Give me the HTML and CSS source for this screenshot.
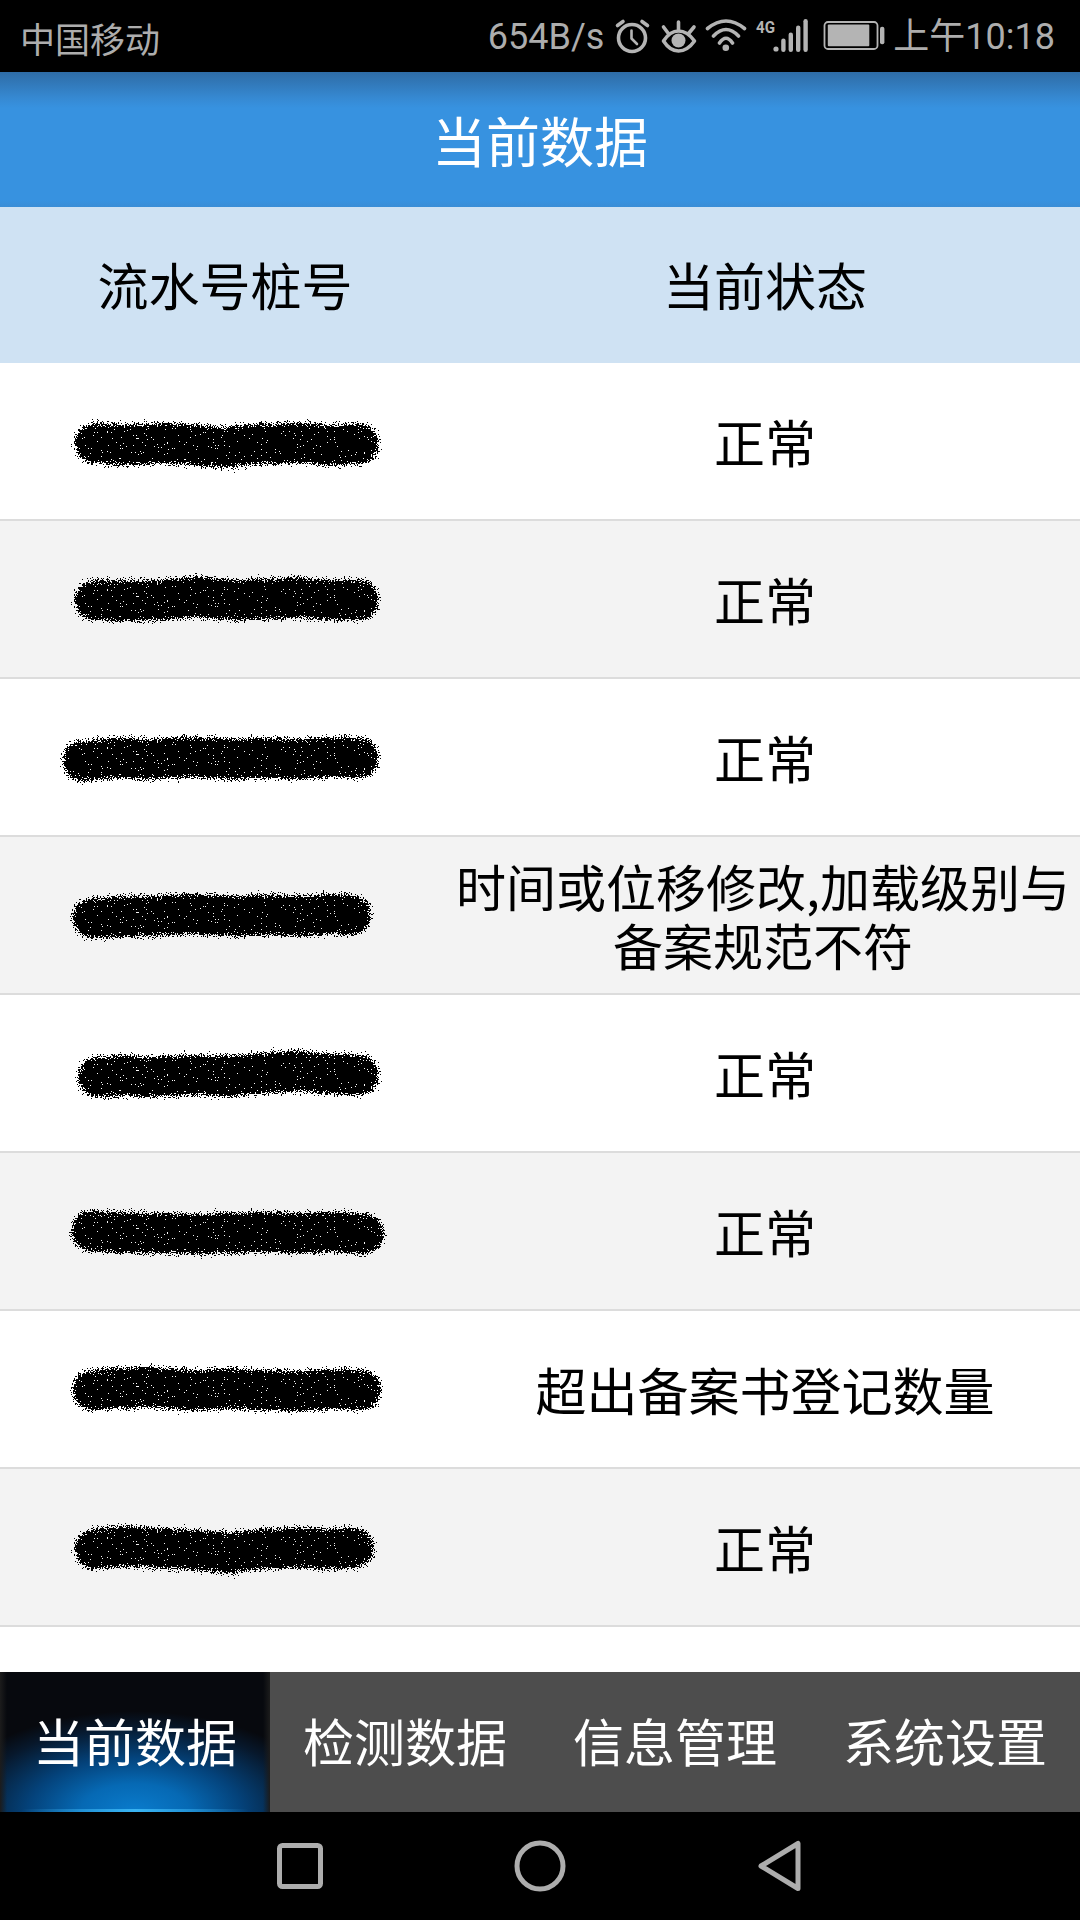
FILE: index.html
```html
<!DOCTYPE html>
<html lang="zh-CN">
<head>
<meta charset="utf-8">
<title>当前数据</title>
<link rel="stylesheet" href="styles.css">
</head>
<body>
<svg class="defs" aria-hidden="true">
  <defs>
    <filter id="smudge" filterUnits="userSpaceOnUse" x="40" y="-10" width="370" height="100" color-interpolation-filters="sRGB">
      <feTurbulence type="fractalNoise" baseFrequency="0.7" numOctaves="3" seed="7" result="n"/>
      <feDisplacementMap in="SourceGraphic" in2="n" scale="16" xChannelSelector="R" yChannelSelector="G" result="d"/>
      <feColorMatrix in="n" type="matrix" values="0 0 0 0 0  0 0 0 0 0  0 0 0 0 0  14 0 0 0 -3.1" result="m"/>
      <feComposite in="d" in2="m" operator="in" result="c"/>
      <feComponentTransfer in="c"><feFuncA type="discrete" tableValues="0 1"/></feComponentTransfer>
    </filter>
  </defs>
</svg>
<div class="app">
  <header class="status">
    <span class="carrier">中国移动</span>
    <div class="status-right">
      <span class="speed">654B/s</span>
      <svg class="status-icons" viewBox="612 14 276 44" width="276" height="44">
        <g class="ic-stroke">
          <circle cx="632" cy="38" r="13.5"/>
          <path d="M617.5 25.5L623 21.5M642 21.5L647.5 25.5"/>
          <path class="thin" d="M631.5 30.5V38.5L637 44"/>
          <path d="M663.5 41C668 34 673 31 678.5 31C684 31 689.500 34 694.500 41C689.500 48 684 51 678.500 51C673 51 668 48 663.500 41Z"/>
          <path d="M678.500 22V29.500M663.500 27L668 33M694 27L689 33"/>
          <path d="M707.500 28.500Q726 13.500 744.500 28.500M713.500 36Q726 23 738.500 36M719.500 43Q726 33.500 732.500 43"/>
        </g>
        <g class="ic-fill">
          <circle cx="678.500" cy="40.500" r="7"/>
          <circle cx="725.800" cy="47.700" r="3.300"/>
          <circle cx="776" cy="49" r="2.600"/>
          <rect x="781.200" y="38.500" width="4.400" height="13.500" rx="2.200"/>
          <rect x="788.600" y="32.500" width="4.400" height="19.500" rx="2.200"/>
          <rect x="796" y="25.500" width="4.400" height="26.500" rx="2.200"/>
          <rect x="803.400" y="19" width="4.400" height="33" rx="2.200"/>
          <rect x="827.800" y="24.500" width="41.500" height="21.800" rx="1"/>
          <rect x="880" y="26.700" width="4.400" height="17.600" rx="2"/>
          <text class="net" x="756" y="33" textLength="19" lengthAdjust="spacingAndGlyphs">4G</text>
        </g>
        <rect class="bat" x="824.500" y="22" width="53" height="27" rx="3.500"/>
      </svg>
      <span class="clock">上午10:18</span>
    </div>
  </header>

  <div class="titlebar">当前数据</div>

  <div class="thead">
    <div class="col-a">流水号桩号</div>
    <div class="col-b">当前状态</div>
  </div>

  <main class="tbody">
    <div class="row">
      <div class="col-a"><svg class="smear" viewBox="55 0 340 80" width="340" height="80"><path d="M95 42L125 44L165 42L205 45L225 46L265 43L300 42L330 44L359 43"/></svg></div>
      <div class="col-b">正常</div>
    </div>
    <div class="row alt">
      <div class="col-a"><svg class="smear" viewBox="55 0 340 80" width="340" height="80"><path d="M95 41L125 42L160 41L195 38L230 41L265 40L300 39L335 41L359 41"/></svg></div>
      <div class="col-b">正常</div>
    </div>
    <div class="row">
      <div class="col-a"><svg class="smear" viewBox="55 0 340 80" width="340" height="80"><path d="M83 44L115 41L150 42L190 40L230 42L265 41L300 42L335 40L359 41"/></svg></div>
      <div class="col-b">正常</div>
    </div>
    <div class="row alt">
      <div class="col-a"><svg class="smear" viewBox="55 0 340 80" width="340" height="80"><path d="M93 43L120 42L150 41L190 39L230 41L265 40L300 41L330 39L351 40"/></svg></div>
      <div class="col-b long">时间或位移修改,加载级别与备案规范不符</div>
    </div>
    <div class="row">
      <div class="col-a"><svg class="smear" viewBox="55 0 340 80" width="340" height="80"><path d="M98 44L125 43L150 44L190 42L230 43L265 40L300 38L335 41L359 42"/></svg></div>
      <div class="col-b">正常</div>
    </div>
    <div class="row alt">
      <div class="col-a"><svg class="smear" viewBox="55 0 340 80" width="340" height="80"><path d="M92 40L125 42L160 42L195 43L230 42L265 41L300 42L335 41L364 43"/></svg></div>
      <div class="col-b">正常</div>
    </div>
    <div class="row">
      <div class="col-a"><svg class="smear" viewBox="55 0 340 80" width="340" height="80"><path d="M93 41L120 39L150 38L190 41L230 40L265 41L300 42L335 40L361 41"/></svg></div>
      <div class="col-b">超出备案书登记数量</div>
    </div>
    <div class="row alt">
      <div class="col-a"><svg class="smear" viewBox="55 0 340 80" width="340" height="80"><path d="M95 42L125 39L160 41L195 43L230 46L265 42L300 41L335 42L354 41"/></svg></div>
      <div class="col-b">正常</div>
    </div>
  </main>

  <nav class="tabs">
    <div class="tab active">当前数据</div>
    <div class="tab">检测数据</div>
    <div class="tab">信息管理</div>
    <div class="tab">系统设置</div>
  </nav>

  <footer class="navbar">
    <div class="nav-cell"><svg viewBox="0 0 46 46" width="46" height="46"><rect x="2.500" y="2.500" width="41" height="41" rx="3"/></svg></div>
    <div class="nav-cell"><svg viewBox="0 0 52 52" width="52" height="52"><circle cx="26" cy="26" r="23"/></svg></div>
    <div class="nav-cell"><svg viewBox="0 0 44 52" width="44" height="52"><path d="M40 3.500V48.500L3 26Z"/></svg></div>
  </footer>
</div>
</body>
</html>
```
FILE: styles.css
```css
* { box-sizing: border-box; margin: 0; padding: 0; }

html, body {
  width: 1080px;
  height: 1920px;
  overflow: hidden;
  background: #fff;
}

body {
  font-family: "Noto Sans CJK SC", "Noto Sans", sans-serif;
}

.defs {
  position: absolute;
  width: 0;
  height: 0;
}

.app {
  display: flex;
  flex-direction: column;
  width: 1080px;
  height: 1920px;
}

/* status bar */
.status {
  display: flex;
  align-items: center;
  justify-content: space-between;
  flex: none;
  height: 72px;
  padding: 2px 25px 0 20px;
  background: #000;
  color: #adadad;
  font-size: 36px;
  font-family: Roboto, "Noto Sans CJK SC", sans-serif;
  line-height: 1;
}

.carrier {
  font-family: "Noto Sans CJK SC", sans-serif;
  font-size: 35px;
  font-weight: 400;
}

.status-right {
  display: flex;
  align-items: center;
}

.speed { margin-right: 8px; }

.status-icons { flex: none; margin: -2px 5px 0 0; }

.clock { font-weight: 400; }

.ic-stroke path,
.ic-stroke circle {
  fill: none;
  stroke: #b4b4b4;
  stroke-width: 3.6;
  stroke-linecap: round;
  stroke-linejoin: round;
}

.ic-stroke path.thin { stroke-width: 2.6; }

.ic-fill { fill: #b4b4b4; }

.net {
  font-family: Roboto, sans-serif;
  font-weight: 700;
  font-size: 17px;
}

.bat {
  fill: none;
  stroke: #b4b4b4;
  stroke-width: 1.8;
}

/* title */
.titlebar {
  flex: none;
  height: 135px;
  padding-top: 1px;
  display: flex;
  align-items: center;
  justify-content: center;
  background: linear-gradient(#2e6ca6 0, #3689d2 26px, #3792e0 36px, #3792e0 128px, #3a8dd6 135px);
  color: #fff;
  font-size: 54px;
  font-weight: 400;
  line-height: 1;
}

/* table */
.thead,
.row {
  display: grid;
  grid-template-columns: 450px 630px;
  align-items: center;
  flex: none;
  color: #000;
  font-size: 51px;
  font-weight: 400;
  line-height: 59px;
  text-align: center;
}

.thead {
  height: 156px;
  background: #cfe2f3;
  padding-bottom: 2px;
}

.tbody {
  flex: 1;
  min-height: 0;
  overflow: hidden;
  display: flex;
  flex-direction: column;
  background: #fff;
}

.row {
  height: 158px;
  background: #fff;
  border-bottom: 2px solid #dcdcdc;
}

.row.alt { background: #f3f3f3; }

.col-a {
  display: flex;
  justify-content: center;
  align-items: center;
}

.col-b.long {
  font-size: 50px;
  padding-right: 4px;
}

.smear { display: block; overflow: visible; }

.smear path {
  fill: none;
  stroke: #000;
  stroke-width: 40;
  stroke-linecap: round;
  stroke-linejoin: round;
  filter: url(#smudge);
}

/* tabs */
.tabs {
  display: grid;
  grid-template-columns: repeat(4, 270px);
  flex: none;
  height: 140px;
  background: #4d4d4d;
}

.tab {
  display: flex;
  align-items: center;
  justify-content: center;
  color: #fff;
  font-size: 51px;
  font-weight: 400;
  line-height: 1;
  padding-bottom: 4px;
}

.tab.active {
  background:
    linear-gradient(90deg, rgba(58, 176, 240, 0) 8%, #3ab4f2 50%, rgba(58, 176, 240, 0) 92%) bottom / 100% 3px no-repeat,
    linear-gradient(90deg, #1c1c1c 0, rgba(28, 28, 28, 0) 7px, rgba(28, 28, 28, 0) 263px, #1c1c1c 270px),
    radial-gradient(ellipse 72% 72% at 50% 100%, #0a7ccd 0, #0669b4 28%, #04427a 55%, #07182c 85%, #07090e 100%),
    #07090e;
}

/* android navigation */
.navbar {
  display: grid;
  grid-template-columns: repeat(3, 240px);
  justify-content: center;
  align-items: center;
  flex: none;
  height: 108px;
  background: #000;
}

.nav-cell {
  display: flex;
  align-items: center;
  justify-content: center;
}

.nav-cell svg {
  fill: none;
  stroke: #adadad;
  stroke-width: 5;
  stroke-linejoin: round;
}
```
